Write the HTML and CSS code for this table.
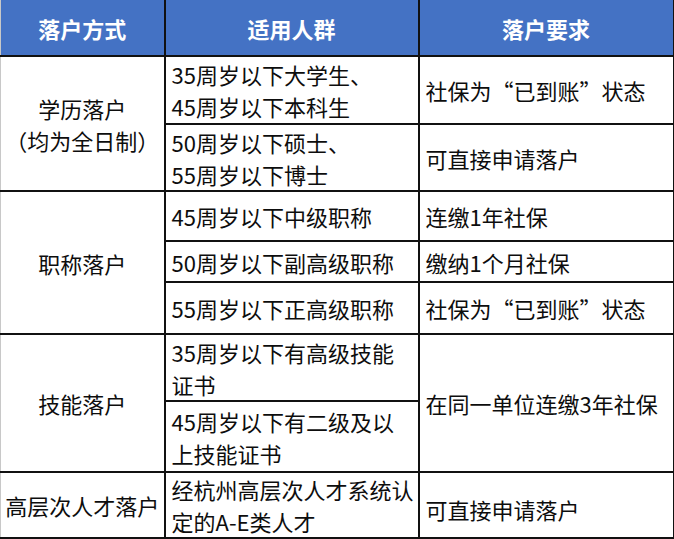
FILE: index.html
```html
<!DOCTYPE html>
<html lang="zh-CN">
<head>
<meta charset="utf-8">
<link rel="stylesheet" href="styles.css">
</head>
<body>
<table class="grid">
  <colgroup>
    <col class="c1">
    <col class="c2">
    <col class="c3">
  </colgroup>
  <thead>
    <tr class="head">
      <th>落户方式</th>
      <th>适用人群</th>
      <th>落户要求</th>
    </tr>
  </thead>
  <tbody>
    <tr class="r1">
      <td class="type" rowspan="2">学历落户<br>（均为全日制）</td>
      <td>35周岁以下大学生、<br>45周岁以下本科生</td>
      <td>社保为“已到账”状态</td>
    </tr>
    <tr class="r2">
      <td>50周岁以下硕士、<br>55周岁以下博士</td>
      <td>可直接申请落户</td>
    </tr>
    <tr class="r3">
      <td class="type" rowspan="3">职称落户</td>
      <td>45周岁以下中级职称</td>
      <td>连缴1年社保</td>
    </tr>
    <tr class="r4">
      <td>50周岁以下副高级职称</td>
      <td>缴纳1个月社保</td>
    </tr>
    <tr class="r5">
      <td>55周岁以下正高级职称</td>
      <td>社保为“已到账”状态</td>
    </tr>
    <tr class="r6">
      <td class="type" rowspan="2">技能落户</td>
      <td>35周岁以下有高级技能<br>证书</td>
      <td rowspan="2">在同一单位连缴3年社保</td>
    </tr>
    <tr class="r7">
      <td>45周岁以下有二级及以<br>上技能证书</td>
    </tr>
    <tr class="r8">
      <td class="type">高层次人才落户</td>
      <td>经杭州高层次人才系统认<br>定的A-E类人才</td>
      <td class="low">可直接申请落户</td>
    </tr>
  </tbody>
</table>
</body>
</html>
```
FILE: styles.css
```css
html, body {
  margin: 0;
  padding: 0;
  background: #ffffff;
}
.grid {
  border-collapse: collapse;
  table-layout: fixed;
  width: 673px;
  font-family: "Noto Sans CJK SC", "Noto Sans", sans-serif;
  font-size: 22px;
  line-height: 32px;
  color: #0d0d0d;
}
.c1 { width: 164px; }
.c2 { width: 254px; }
.c3 { width: 255px; }
.grid th, .grid td {
  border: 2px solid #111;
  padding: 0 0 0 6px;
  vertical-align: middle;
  white-space: nowrap;
  text-align: left;
}
.grid th {
  background: #4472c4;
  color: #ffffff;
  font-weight: 700;
  text-align: center;
  padding: 0;
  border-top: none;
}
.grid th:first-child, .grid td.type {
  border-left: 1px solid #c8c8c8;
}
.grid th:last-child {
  border-right: 2px solid #111;
}
.grid td.type {
  text-align: center;
  padding: 0;
}
.grid td.low {
  padding-top: 8px;
}
.head { height: 56px; }
.r1 { height: 68px; }
.r2 { height: 67px; }
.r3 { height: 50px; }
.r4 { height: 41px; }
.r5 { height: 52px; }
.r6 { height: 67px; }
.r7 { height: 71px; }
.r8 { height: 66px; }
```
